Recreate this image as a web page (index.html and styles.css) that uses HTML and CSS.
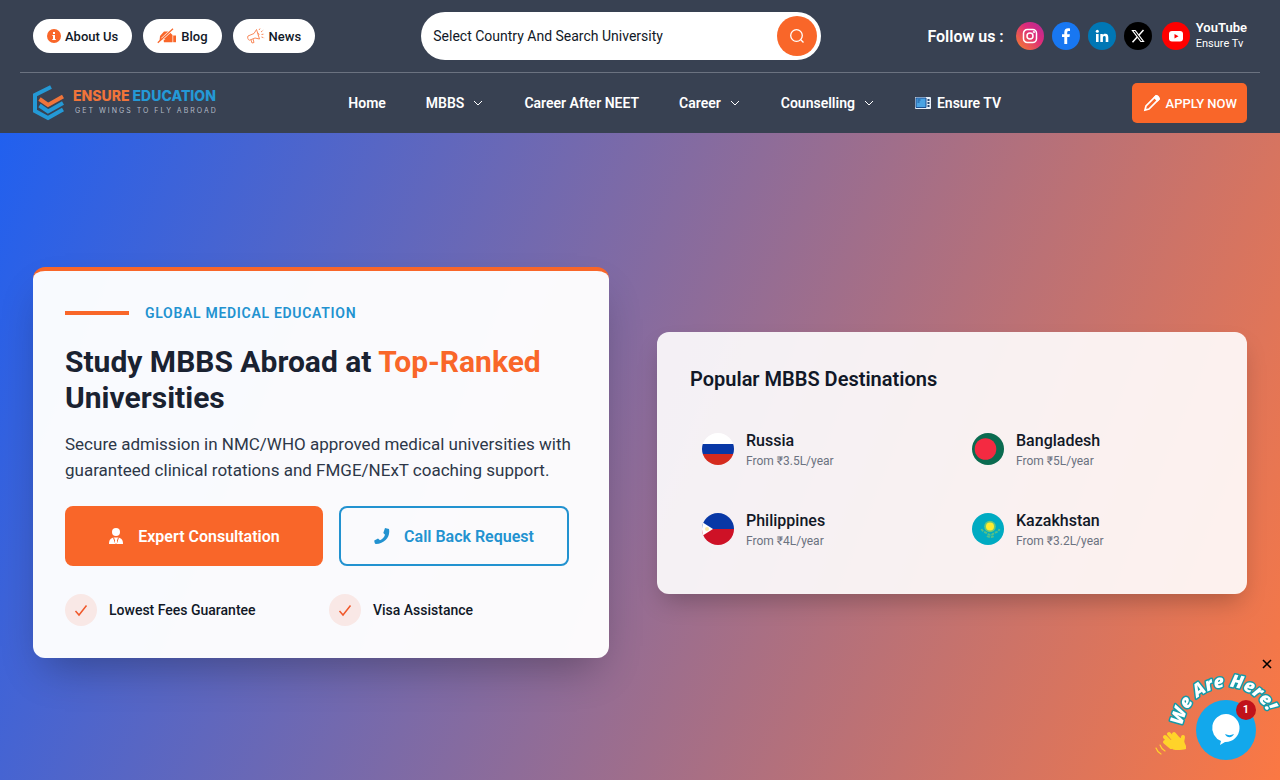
FILE: index.html
```
<!DOCTYPE html>
<html lang="en">
<head>
    <meta charset="UTF-8">
    <meta name="viewport" content="width=device-width, initial-scale=1.0">
    <title>Ensure Education - Study MBBS Abroad</title>
    <link rel="stylesheet" href="styles.css">
</head>
<body>
    <header class="header">
        <div class="topbar">
            <div class="pills">
                <a class="pill" href="#about">
                    <svg width="14" height="14" viewBox="0 0 14 14"><circle cx="7" cy="7" r="7" fill="#f96629"/><path d="M6 3h2v2H6zM5.400 6H8v4h.8v1H5.300v-1H6V7h-.6z" fill="#fff"/></svg>
                    About Us
                </a>
                <a class="pill" href="#blog">
                    <svg width="20" height="16" viewBox="0 0 20 16"><path d="M2.500 13 3 8l4-4.500h5l3.500 3.500v7.200H7l-.5-1.700 2-1.200H6z" fill="#f96629"/><path d="m5 11 8-7.500" stroke="#fff" stroke-width="2.400"/><path d="M.8 14.800 16 .8" stroke="#f96629" stroke-width="1.300"/><path d="M16.200 7.500H19v6.700h-2.800z" fill="#f96629"/></svg>
                    Blog
                </a>
                <a class="pill" href="#news">
                    <svg width="18" height="16" viewBox="0 0 18 16" fill="none" stroke="#f98a5c"><path d="m1 8 6-2.500L9.500 1.500l3 9.500L8 10l-5.500 2.200C.8 12 .2 9 1 8zM4 12l1 3 2-.5-1-3.500M10.500 5c1.500 0 2 2 .8 2.600"/><path d="m12 2 1-1.500M14 4l2.500-2M14.500 6.500l3-.5M14.500 9l3 1" stroke-dasharray="2 1"/></svg>
                    News
                </a>
            </div>

            <form class="search" role="search">
                <input type="text" class="search-input" aria-label="Search university" placeholder="Select Country And Search University">
                <button type="button" class="search-btn" aria-label="Search">
                    <svg width="16" height="16" viewBox="0 0 16 16" fill="none" stroke="#fff" stroke-width="1.300"><circle cx="7.500" cy="7.500" r="5.800"/><path d="m11.800 11.800 2.700 2.700"/></svg>
                </button>
            </form>

            <div class="social">
                <span class="social-title">Follow us :</span>
                <a class="social-icon instagram" href="#instagram" aria-label="Instagram">
                    <svg width="16" height="16" viewBox="0 0 16 16" fill="none" stroke="#fff" stroke-width="1.500"><rect x="1.500" y="1.500" width="13" height="13" rx="3.800"/><circle cx="8" cy="8" r="3"/><circle cx="11.800" cy="4.200" r=".4"/></svg>
                </a>
                <a class="social-icon facebook" href="#facebook" aria-label="Facebook">
                    <svg width="16" height="16" viewBox="0 0 16 16"><path d="M6.300 16V9H4V6.300h2.300V4.500C6.300 1.800 7.600.3 10.200.3c.8 0 1.500.1 1.800.2v2.400h-1.300c-1.200 0-1.500.6-1.500 1.600v1.800h2.700L11.500 9H9.200v7z" fill="#fff"/></svg>
                </a>
                <a class="social-icon linkedin" href="#linkedin" aria-label="LinkedIn">
                    <svg width="14" height="14" viewBox="0 0 14 14" fill="#fff"><circle cx="2.300" cy="2.300" r="1.500"/><path d="M1 5h2.600v8H1zM5.300 5h2.500v1.100C8.300 5.300 9.200 4.800 10.300 4.800c2.400 0 3 1.500 3 3.700V13h-2.600V9c0-1.100-.1-2-1.300-2-1.200 0-1.500.9-1.500 2v4H5.300z"/></svg>
                </a>
                <a class="social-icon x" href="#x" aria-label="X">
                    <svg width="14" height="14" viewBox="0 0 14 14" fill="none" stroke="#fff" stroke-width="1.200"><path d="M1.500 1.500h2.700l8.300 11H9.800z"/><path d="M12.500 1 7.800 6.300M6.200 8 1.500 13.200" stroke-width="1.500"/></svg>
                </a>
                <a class="youtube" href="#youtube">
                    <span class="social-icon youtube-icon">
                        <svg width="16" height="16" viewBox="0 0 16 16"><rect x="1" y="3" width="14" height="10.500" rx="3" fill="#fff"/><path d="m6.500 6 4 2.200-4 2.300z" fill="#f00"/></svg>
                    </span>
                    <span class="youtube-text"><strong>YouTube</strong><small>Ensure Tv</small></span>
                </a>
            </div>
        </div>

        <div class="navbar">
            <a class="logo" href="#home">
                <svg width="32" height="36" viewBox="0 0 32 36" fill="none" stroke="#2499d6" stroke-width="4"><path d="M18 2 2 10v16l13 7 15-8.500M6.500 20.500l8.500 6 15-8.500"/><path d="m6.500 14 8.500 6 15-8.500" stroke="#f0743a"/></svg>
                <span class="logo-text">
                    <span class="logo-name"><b>ENSURE</b> EDUCATION</span>
                    <span class="logo-tag">GET WINGS TO FLY ABROAD</span>
                </span>
            </a>
            <nav class="nav">
                <a href="#home">Home</a>
                <a href="#mbbs">MBBS <svg class="chevron" viewBox="0 0 12 12"><path d="m2 4 4 4 4-4"/></svg></a>
                <a href="#neet">Career After NEET</a>
                <a href="#career">Career <svg class="chevron" viewBox="0 0 12 12"><path d="m2 4 4 4 4-4"/></svg></a>
                <a href="#counselling">Counselling <svg class="chevron" viewBox="0 0 12 12"><path d="m2 4 4 4 4-4"/></svg></a>
                <a class="nav-tv" href="#tv">
                    <svg width="16" height="12" viewBox="0 0 16 12"><rect width="16" height="12" rx="1" fill="#e6eef8"/><path d="M1 1h10v9.500H1z" fill="#4aa3e3" stroke="#1d4f91"/><path d="M12.500 2h2v2h-2zM12.500 5h2v2h-2zM12.500 8h2v2h-2z" fill="#27466f"/><path d="M2.500 3h3M2.500 5h2" stroke="#1d4f91"/></svg>
                    Ensure TV
                </a>
            </nav>
            <button type="button" class="apply-btn">
                <svg width="18" height="18" viewBox="0 0 18 18" fill="none" stroke="#fff" stroke-width="1.700"><path d="m2 16 1-4L12.800 2.200c1.400-1 4 1.500 3 3L6 15z"/><path d="m11.500 3.500 3 3 1.500-1.500-3-3z" fill="#fff"/></svg>
                APPLY NOW
            </button>
        </div>
    </header>

    <main class="hero">
        <section class="intro">
            <div class="eyebrow">GLOBAL MEDICAL EDUCATION</div>
            <h1>Study MBBS Abroad at <span>Top-Ranked</span> Universities</h1>
            <p>Secure admission in NMC/WHO approved medical universities with guaranteed clinical rotations and FMGE/NExT coaching support.</p>
            <div class="actions">
                <button type="button" class="btn btn-primary">
                    <svg width="16" height="16" viewBox="0 0 16 16" fill="#fff"><circle cx="8" cy="4" r="4"/><path d="M1 16c0-4 1.500-6 5-6.500h4c3.500.5 5 2.500 5 6.500z"/><path d="m5.500 9.500 2 6M10.500 9.500l-2 6" stroke="#f96629"/><path d="M7 10h2l-.5 1.500.7 3L8 16l-1.200-1.500.7-3z"/></svg>
                    Expert Consultation
                </button>
                <button type="button" class="btn btn-outline">
                    <svg width="16" height="16" viewBox="0 0 16 16"><path d="M11 0 15 1c1.500 7.500-4 14.500-13 15-1.200 0-1.800-2-1.700-3.500L4 10.500l2 1.700c2.500-1 4.300-3 5-5.500L9.300 5z" fill="#2292d0"/></svg>
                    Call Back Request
                </button>
            </div>
            <ul class="features">
                <li><span class="check"><svg width="16" height="16" viewBox="0 0 16 16"><path d="m2.500 9 3.500 4 7.500-9.500"/></svg></span>Lowest Fees Guarantee</li>
                <li><span class="check"><svg width="16" height="16" viewBox="0 0 16 16"><path d="m2.500 9 3.500 4 7.500-9.500"/></svg></span>Visa Assistance</li>
            </ul>
        </section>

        <section class="destinations">
            <h2>Popular MBBS Destinations</h2>
            <div class="country-grid">
                <a class="country" href="#russia">
                    <svg class="flag" viewBox="0 0 32 32"><path fill="#fff" d="M0 0h32v11H0z"/><path fill="#0838a6" d="M0 11h32v10H0z"/><path fill="#d52b1e" d="M0 21h32v11H0z"/></svg>
                    <span><strong>Russia</strong><small>From ₹3.5L/year</small></span>
                </a>
                <a class="country" href="#bangladesh">
                    <svg class="flag" viewBox="0 0 32 32"><path fill="#0b6b50" d="M0 0h32v32H0z"/><circle cx="13.500" cy="16" r="10.800" fill="#f42a41"/></svg>
                    <span><strong>Bangladesh</strong><small>From ₹5L/year</small></span>
                </a>
                <a class="country" href="#philippines">
                    <svg class="flag" viewBox="0 0 32 32"><path fill="#0838a6" d="M0 0h32v16H0z"/><path fill="#ce1126" d="M0 16h32v16H0z"/><path fill="#fff" d="m0 9 11 7-11 7z"/><circle cx="5" cy="16" r="2" fill="#fbe9a8"/></svg>
                    <span><strong>Philippines</strong><small>From ₹4L/year</small></span>
                </a>
                <a class="country" href="#kazakhstan">
                    <svg class="flag" viewBox="0 0 32 32"><path fill="#00abc2" d="M0 0h32v32H0z"/><circle cx="18" cy="13.500" r="5.800" fill="#6cc777"/><circle cx="18" cy="13.500" r="4" fill="#ffec2d"/><path d="M9.500 16c1 3 4 3 6 4.500 2 2 4 2 6 0 2-1.500 5-1.500 6-4.500M15 23c2 1.500 5 1.500 7 0" fill="none" stroke="#58c086" stroke-width="1.800" stroke-dasharray="3 1"/></svg>
                    <span><strong>Kazakhstan</strong><small>From ₹3.2L/year</small></span>
                </a>
            </div>
        </section>
    </main>

    <!-- Live chat -->
    <div class="chat">
        <svg class="chat-art" viewBox="0 0 140 130">
            <path id="arc" d="M42 82a45 45 0 0 1 90 0" fill="none"/>
            <text class="chat-label"><textPath href="#arc" startOffset="6">We Are Here!</textPath></text>
            <g fill="none" stroke="#ffd32a" stroke-linecap="round">
                <path d="M16 98c1 3 3 5 5 6M20 95c1 3 3 5 5 6" stroke-width="1.200"/>
                <path d="m33 95-8-8M36 92l-7-8M40 91l-6-7M31 97l-6-5M42 93l1-6" stroke-width="4"/>
            </g>
            <path d="m28 91 10-4 5 2 3 7v3c-4 1-9 1.500-13 .5l-5-5z" fill="#ffd32a"/>
        </svg>
        <button type="button" class="chat-close" aria-label="Close">
            <svg width="12" height="12" viewBox="0 0 12 12"><path d="m2 2 8 8M10 2l-8 8" stroke="#000" stroke-width="1.600"/></svg>
        </button>
        <button type="button" class="chat-btn" aria-label="Open chat">
            <svg width="32" height="34" viewBox="0 0 32 34"><path d="M16 1a14 14 0 1 1-1 28l-5 3 1-4A14 14 0 0 1 16 1z" fill="#fff"/><path d="M15 21c3 1.500 6 1.500 9 0-1.500 4-7 4.500-9 0z" fill="#12a8ec"/></svg>
            <span class="chat-badge">1</span>
        </button>
    </div>
</body>
</html>
```

FILE: styles.css
```
* {
    box-sizing: border-box;
}
body {
    margin: 0;
    font-family: Roboto, "Liberation Sans", sans-serif;
    color: #111827;
}
a {
    color: inherit;
    text-decoration: none;
}
button {
    border: none;
    padding: 0;
    font-family: inherit;
    cursor: pointer;
}
h1, h2, p, ul {
    margin: 0;
    padding: 0;
}
svg {
    flex-shrink: 0;
}

/* Header */
.header {
    background-color: #384152;
    color: #fff;
    padding: 0 20px;
}
.topbar, .navbar {
    display: flex;
    align-items: center;
    justify-content: space-between;
    padding: 0 13px;
}
.topbar {
    height: 73px;
    border-bottom: 1px solid #6b7280;
}
.navbar {
    height: 60px;
}
.pills {
    display: flex;
    gap: 11px;
}
.pill {
    display: flex;
    align-items: center;
    gap: 4px;
    height: 34px;
    padding: 0 14px;
    border-radius: 17px;
    background-color: #fff;
    color: #111827;
    font-size: 13px;
    font-weight: 500;
}
.search {
    display: flex;
    align-items: center;
    width: 400px;
    height: 48px;
    padding: 0 4px 0 12px;
    border-radius: 24px;
    background-color: #fff;
}
.search-input {
    flex: 1;
    border: none;
    outline: none;
    padding: 0;
    background: none;
    font-family: inherit;
    font-size: 14px;
}
.search-input::placeholder {
    color: #111827;
    opacity: 1;
}
.search-btn {
    display: flex;
    align-items: center;
    justify-content: center;
    width: 40px;
    height: 40px;
    border-radius: 50%;
    background-color: #f96629;
}
.social {
    display: flex;
    align-items: center;
    gap: 8px;
}
.social-title {
    margin-right: 4px;
    font-size: 16px;
    font-weight: 600;
}
.social-icon {
    display: flex;
    align-items: center;
    justify-content: center;
    width: 28px;
    height: 28px;
    border-radius: 50%;
}
.instagram {
    background: linear-gradient(45deg, #f58529, #dd2a7b 60%, #b02a9b);
}
.facebook {
    background-color: #1877f2;
}
.linkedin {
    background-color: #0077b5;
}
.x {
    background-color: #000;
}
.youtube {
    display: flex;
    align-items: center;
    gap: 6px;
    margin-left: 2px;
}
.youtube-icon {
    background-color: #f00;
}
.youtube-text {
    display: flex;
    flex-direction: column;
    line-height: 16px;
}
.youtube-text strong {
    font-size: 13px;
    font-weight: 600;
}
.youtube-text small {
    font-size: 11px;
}
.logo {
    display: flex;
    align-items: center;
    gap: 8px;
}
.logo-text {
    display: flex;
    flex-direction: column;
}
.logo-name {
    font-family: Inter, sans-serif;
    font-size: 14px;
    line-height: 16px;
    font-weight: 800;
    color: #2499d6;
}
.logo-name b {
    font-weight: 800;
    color: #f0743a;
}
.logo-tag {
    padding-left: 2px;
    font-family: Inter, sans-serif;
    font-size: 7px;
    line-height: 14px;
    letter-spacing: 2px;
    color: #b3bac6;
}
.nav {
    display: flex;
    gap: 40px;
    font-size: 14px;
    font-weight: 600;
}
.nav a {
    display: flex;
    align-items: center;
    gap: 8px;
}
.nav .nav-tv {
    gap: 6px;
}
.chevron {
    width: 12px;
    height: 12px;
    fill: none;
    stroke: #fff;
}
.apply-btn {
    display: flex;
    align-items: center;
    gap: 5px;
    height: 40px;
    padding: 0 10px 0 11px;
    border-radius: 5px;
    background-color: #f96629;
    color: #fff;
    font-size: 13px;
    font-weight: 500;
}

/* Hero */
.hero {
    display: grid;
    grid-template-columns: minmax(0, 576px) 1fr;
    align-items: center;
    gap: 48px;
    min-height: calc(100vh - 133px);
    padding: 134px 33px 122px;
    background: linear-gradient(112deg, #2160ef, #fb7843);
}
.intro {
    padding: 32px;
    border-top: 4px solid #f96629;
    border-radius: 12px;
    background-color: rgba(255, 255, 255, 0.97);
    box-shadow: 0 20px 40px -12px rgba(0, 0, 0, 0.3);
}
.eyebrow {
    display: flex;
    align-items: center;
    gap: 16px;
    font-size: 14px;
    line-height: 20px;
    font-weight: 600;
    letter-spacing: 0.05em;
    color: #2292d0;
}
.eyebrow::before {
    content: "";
    width: 64px;
    height: 4px;
    background-color: #f96629;
}
.intro h1 {
    margin: 21px 0 15px;
    font-size: 30px;
    line-height: 36px;
    font-weight: 700;
    color: #1a2231;
}
.intro h1 span {
    color: #f96629;
}
.intro p {
    font-size: 17px;
    line-height: 26px;
    color: #2d3748;
}
.actions {
    display: flex;
    gap: 16px;
    margin: 23px 0 28px;
}
.btn {
    display: flex;
    align-items: center;
    justify-content: center;
    gap: 14px;
    height: 60px;
    border-radius: 8px;
    font-size: 16px;
    font-weight: 600;
}
.btn-primary {
    width: 258px;
    background-color: #f96629;
    color: #fff;
}
.btn-outline {
    width: 230px;
    border: 2px solid #2292d0;
    background: none;
    color: #2292d0;
}
.features {
    display: grid;
    grid-template-columns: 1fr 1fr;
    gap: 16px;
    list-style: none;
    font-size: 14px;
    font-weight: 500;
}
.features li {
    display: flex;
    align-items: center;
    gap: 12px;
}
.check {
    display: flex;
    align-items: center;
    justify-content: center;
    width: 32px;
    height: 32px;
    border-radius: 50%;
    background-color: #f9e8e6;
}
.check path {
    fill: none;
    stroke: #f0582a;
    stroke-width: 1.5;
}
.destinations {
    padding: 33px;
    border-radius: 12px;
    background-color: rgba(255, 255, 255, 0.9);
    box-shadow: 0 12px 24px -6px rgba(0, 0, 0, 0.25);
}
.destinations h2 {
    margin-bottom: 24px;
    font-size: 20px;
    line-height: 28px;
    font-weight: 600;
}
.country-grid {
    display: grid;
    grid-template-columns: 1fr 1fr;
    gap: 16px;
}
.country {
    display: flex;
    align-items: center;
    gap: 12px;
    padding: 12px;
}
.flag {
    width: 32px;
    height: 32px;
    border-radius: 50%;
}
.country span {
    display: flex;
    flex-direction: column;
}
.country strong {
    font-size: 16px;
    line-height: 24px;
    font-weight: 500;
}
.country small {
    font-size: 12px;
    line-height: 16px;
    color: #6b7280;
}

/* Chat widget */
.chat {
    position: fixed;
    right: 0;
    bottom: 0;
    width: 140px;
    height: 130px;
}
.chat-art {
    display: block;
    width: 140px;
    height: 130px;
}
.chat-label {
    font-family: "Open Sans", sans-serif;
    font-size: 18px;
    font-weight: 800;
    font-style: italic;
    fill: #fff;
    stroke: #149aa8;
    stroke-width: 3px;
    stroke-linejoin: round;
    paint-order: stroke;
}
.chat-close {
    position: absolute;
    top: 8px;
    right: 7px;
    width: 12px;
    height: 12px;
    background: none;
}
.chat-close svg {
    display: block;
}
.chat-btn {
    position: absolute;
    right: 24px;
    bottom: 20px;
    display: flex;
    align-items: center;
    justify-content: center;
    width: 60px;
    height: 60px;
    border-radius: 50%;
    background-color: #12a8ec;
}
.chat-badge {
    position: absolute;
    top: 0;
    right: 0;
    width: 20px;
    height: 20px;
    border-radius: 50%;
    background-color: #c1121a;
    color: #fff;
    font-size: 11px;
    line-height: 20px;
    font-weight: 600;
}
```
